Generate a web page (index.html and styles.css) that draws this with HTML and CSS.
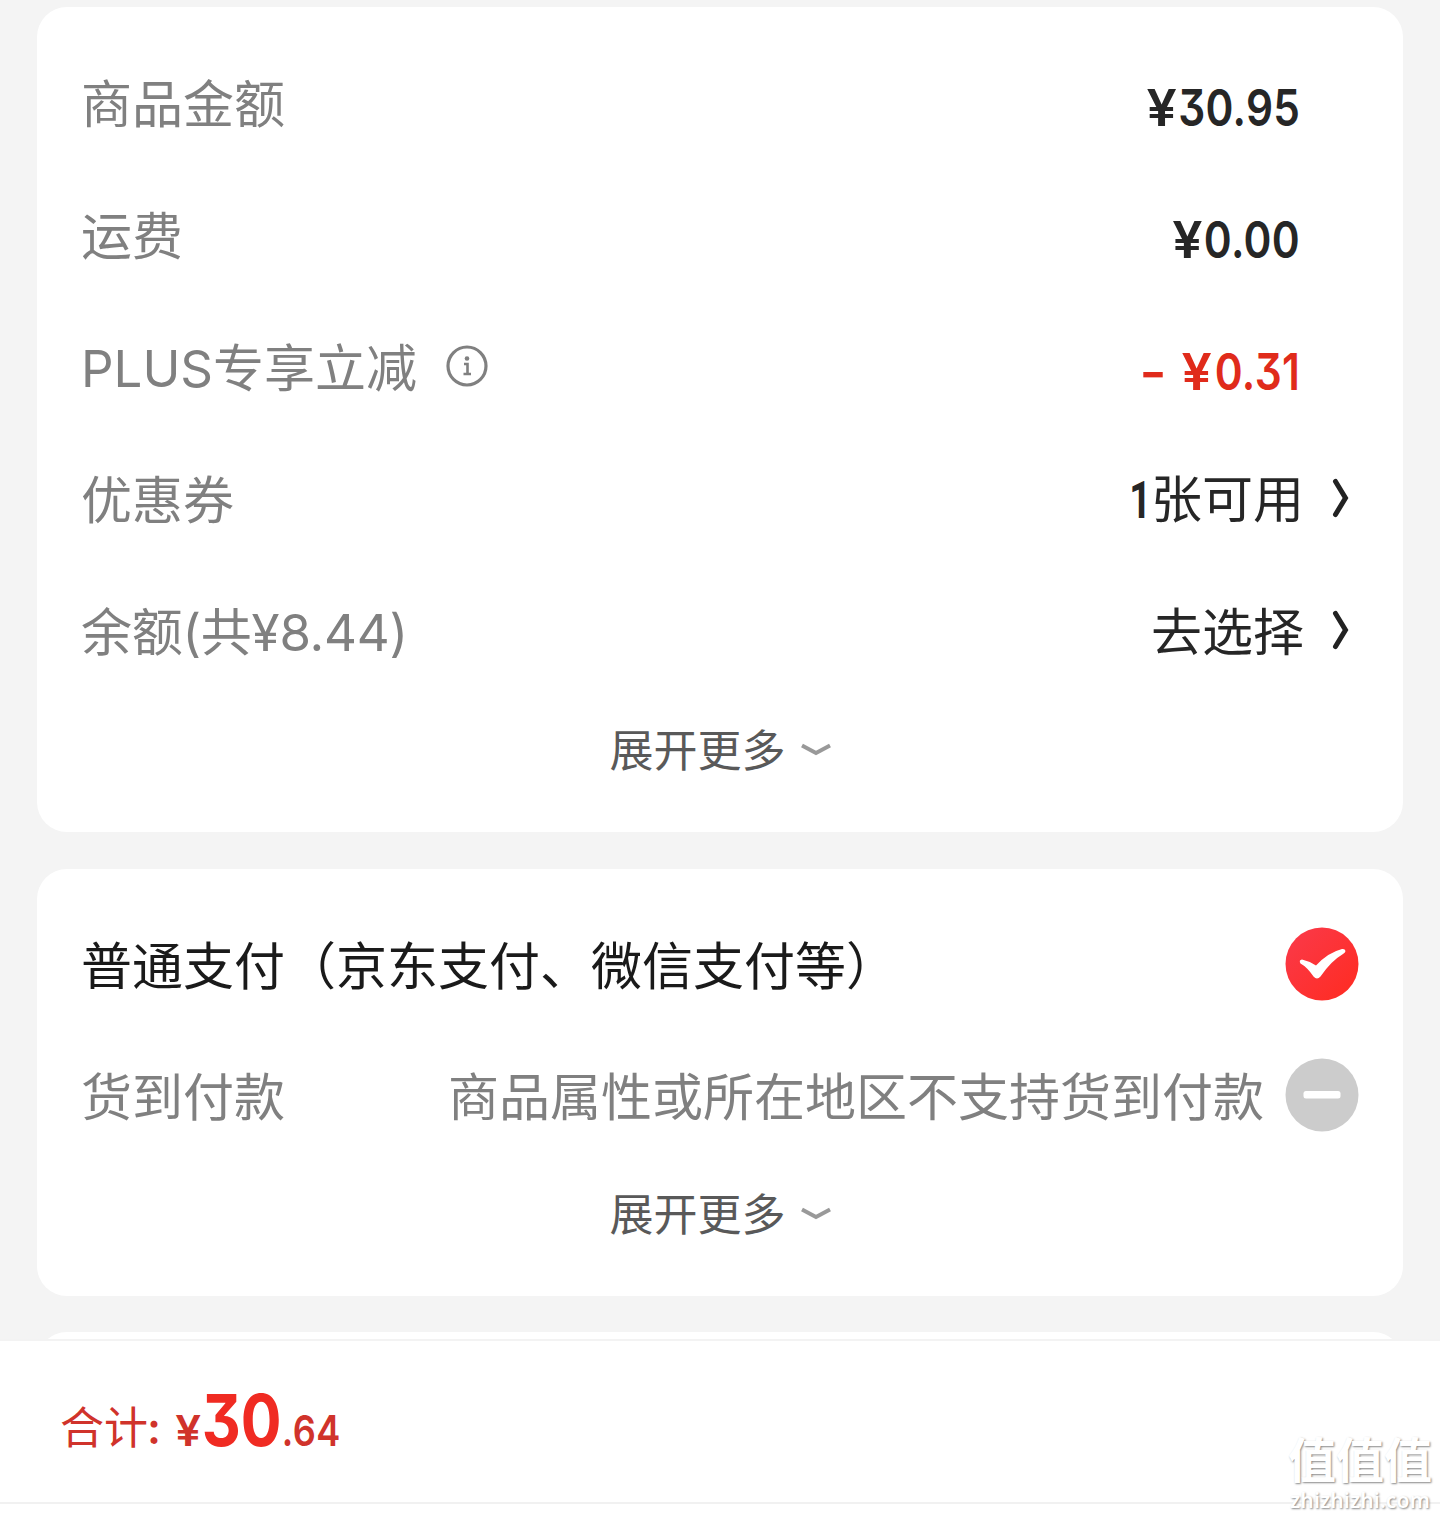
FILE: index.html
```html
<!DOCTYPE html>
<html lang="zh-CN">
<head>
<meta charset="utf-8">
<title>结算</title>
<link rel="stylesheet" href="styles.css">
</head>
<body>
<main class="page">
  <section class="card">
    <div class="row"><span class="label">商品金额</span><span class="price"><span class="yen">¥</span>30.95</span></div>
    <div class="row"><span class="label">运费</span><span class="price"><span class="yen">¥</span>0.00</span></div>
    <div class="row">
      <span class="label">PLUS专享立减</span>
      <svg class="info" viewBox="0 0 42 42"><circle cx="21" cy="21" r="19" fill="none" stroke="#808080" stroke-width="3.2"/><circle cx="21" cy="13.500" r="2.300" fill="#808080"/><path d="M18 19h3.500v10M17.500 29h7.500" fill="none" stroke="#808080" stroke-width="2.600"/></svg>
      <span class="price discount"><span class="minus">-</span><span class="yen">¥</span>0.31</span>
    </div>
    <div class="row">
      <span class="label">优惠券</span><span class="value"><span class="count">1</span>张可用</span>
      <svg class="chevron" viewBox="0 0 18 40"><path d="M3.500 3.500 13.500 20 3.500 36.500" fill="none" stroke="#222" stroke-width="5" stroke-linecap="round"/></svg>
    </div>
    <div class="row">
      <span class="label balance">余额(共¥8.44)</span><span class="value">去选择</span>
      <svg class="chevron" viewBox="0 0 18 40"><path d="M3.500 3.500 13.500 20 3.500 36.500" fill="none" stroke="#222" stroke-width="5" stroke-linecap="round"/></svg>
    </div>
    <div class="more"><span>展开更多</span><svg class="down" viewBox="0 0 30 14"><path d="M1 2.500 15 10 29 2.500" fill="none" stroke="#999" stroke-width="4"/></svg></div>
  </section>

  <section class="card pay">
    <div class="row">
      <span class="label strong">普通支付（京东支付、微信支付等）</span>
      <svg class="radio" viewBox="0 0 74 74"><defs><linearGradient id="red" x1="0" x2="1" y1="0" y2="1"><stop offset="0" stop-color="#fa3a4b"/><stop offset="1" stop-color="#ff2b20"/></linearGradient></defs><circle cx="37" cy="37" r="36.500" fill="url(#red)"/><path d="M17 32.500Q24 34 31 38.500Q43 25.500 57 22Q60 21.500 60.500 24Q60.500 25.500 58 27Q46 34 35.500 49.500Q32 53.500 28.500 49.500Q22 40 15.500 36.500Q13.500 33 17 32.500Z" fill="#fff"/></svg>
    </div>
    <div class="row">
      <span class="label">货到付款</span><span class="reason">商品属性或所在地区不支持货到付款</span>
      <svg class="radio" viewBox="0 0 74 74"><circle cx="37" cy="37" r="36.500" fill="#ccc"/><rect x="18.500" y="33" width="37" height="7.500" rx="2.500" fill="#fff"/></svg>
    </div>
    <div class="more"><span>展开更多</span><svg class="down" viewBox="0 0 30 14"><path d="M1 2.500 15 10 29 2.500" fill="none" stroke="#999" stroke-width="4"/></svg></div>
  </section>

  <section class="card next"></section>
</main>
<footer class="total">
  <span class="total-label">合计<span class="colon">:</span></span>
  <span class="total-price"><span class="small yen">¥</span><span class="big">30</span><span class="small">.64</span></span>
</footer>
<div class="watermark"><span class="mark-name">值值值</span><span class="mark-site">zhizhizhi.com</span></div>
</body>
</html>
```
FILE: styles.css
```css
* { box-sizing: border-box; }

body {
  margin: 0;
  height: 1518px;
  overflow: hidden;
  position: relative;
  display: flex;
  flex-direction: column;
  background: #f4f4f4;
  font-family: Inter, "Noto Sans CJK SC", sans-serif;
  font-size: 51px;
  line-height: 74px;
  white-space: nowrap;
}

.page {
  height: 1339px;
  padding: 7px 37px 0;
  display: flex;
  flex-direction: column;
  gap: 37px;
  overflow: hidden;
}

.card {
  flex: none;
  height: 825px;
  padding: 31px 44px 0;
  border-radius: 30px;
  background: #fff;
}

.pay { height: 427px; padding-top: 29px; }
.next { height: 120px; margin-top: -1px; }

.row {
  display: flex;
  align-items: center;
  height: 132px;
}

.label { padding-top: 1px; color: #808080; }
.balance { letter-spacing: -.25px; }
.strong { color: #1a1a1a; }
.pay .row { height: 131px; }
.pay .label, .pay .reason { padding-top: 6px; }

.price {
  margin-left: auto;
  margin-right: 59px;
  padding-top: 7px;
  font-weight: 600;
  font-feature-settings: "cv09";
  letter-spacing: .4px;
  color: #262626;
  transform: scaleX(.83);
  transform-origin: right center;
}

.yen {
  display: inline-block;
  margin-left: 8px;
  margin-right: 1px;
  transform: scaleX(1.27);
  transform-origin: right center;
}

.discount { color: #e02b1b; }
.discount .yen { margin-right: 3px; }
.minus { display: inline-block; margin-right: 22px; transform: scaleX(1.4); }

.info { width: 42px; height: 42px; margin: 0 0 4px 29px; }

.value { margin-left: auto; margin-right: 28px; padding-top: 1px; color: #262626; }
.count {
  display: inline-block;
  font-family: Roboto, sans-serif;
  font-weight: 700;
  transform: scaleX(.75);
  transform-origin: right center;
}

.chevron { width: 18px; height: 40px; margin: 0 9px 5px 0; }

.more {
  display: flex;
  align-items: center;
  justify-content: center;
  gap: 15px;
  height: 104px;
  font-size: 44px;
  color: #595959;
}

.more span { padding-top: 2px; }
.pay .more { height: 108px; }

.down { width: 30px; height: 14px; }

.radio { flex: none; width: 74px; height: 74px; margin-left: auto; }
.reason { margin-left: auto; margin-right: 21px; color: #808080; }
.reason + .radio { margin-left: 0; }

.total {
  flex: 1;
  display: flex;
  align-items: flex-start;
  padding: 42px 60px 0;
  border-top: 2px solid #f3f3f3;
  background: linear-gradient(#f1f1f1, #f1f1f1) 0 161px / 100% 2px no-repeat #fff;
  color: #d0332b;
}

.total-label { padding-top: 8px; font-size: 44px; }
.colon { margin-left: -1px; font-weight: 600; }

.total-price {
  margin-left: 14px;
  font-weight: 600;
  font-feature-settings: "cv09";
  transform: scaleX(.84);
  transform-origin: left center;
}

.total-price .yen { margin: 0 0 0 7px; }
.big { font-size: 72px; font-weight: 700; color: #f02b22; }
.small { font-size: 43px; letter-spacing: .6px; }

.watermark {
  position: absolute;
  right: 8px;
  bottom: 5px;
  display: flex;
  flex-direction: column;
  align-items: center;
  color: #fff;
  text-shadow: 1px 1px 2px #888;
}

.mark-name { font-size: 48px; font-weight: 700; line-height: 52px; }
.mark-site { font-family: "Noto Sans", sans-serif; font-size: 21px; font-weight: 600; line-height: 26px; letter-spacing: .15px; }
```
